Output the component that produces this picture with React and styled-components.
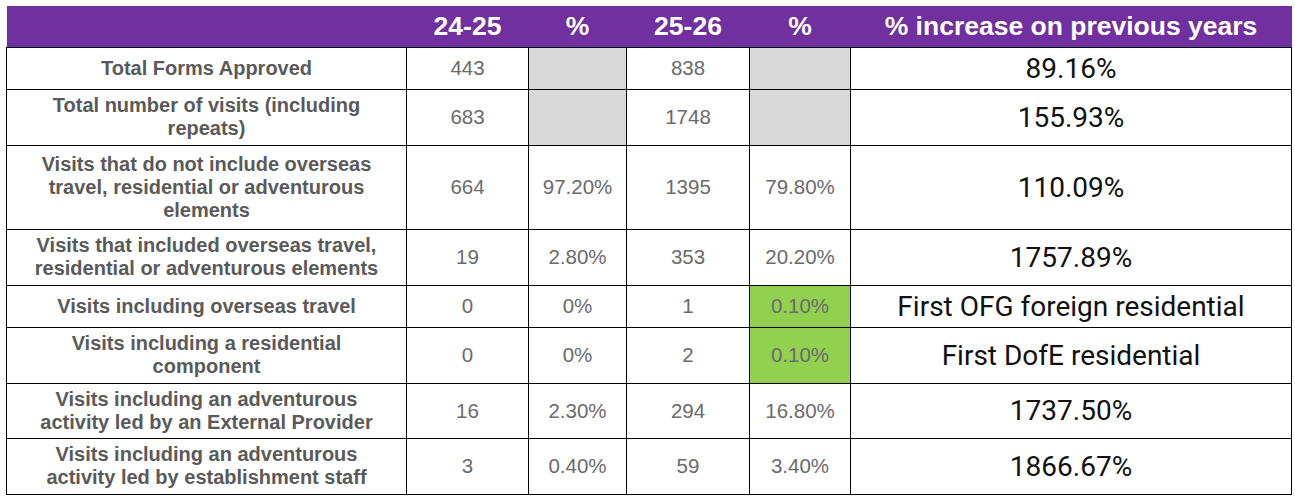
import styled, { createGlobalStyle } from "styled-components";

const GlobalStyle = createGlobalStyle`
  html, body {
    margin: 0;
    padding: 0;
    background: #ffffff;
  }
`;

const rows = [
  { label: "Total Forms Approved", a: "443", ap: null, b: "838", bp: null, inc: "89.16%", h: 42 },
  { label: "Total number of visits (including repeats)", a: "683", ap: null, b: "1748", bp: null, inc: "155.93%", h: 56 },
  { label: "Visits that do not include overseas travel, residential or adventurous elements", a: "664", ap: "97.20%", b: "1395", bp: "79.80%", inc: "110.09%", h: 84 },
  { label: "Visits that included overseas travel, residential or adventurous elements", a: "19", ap: "2.80%", b: "353", bp: "20.20%", inc: "1757.89%", h: 56 },
  { label: "Visits including overseas travel", a: "0", ap: "0%", b: "1", bp: "0.10%", green: true, inc: "First OFG foreign residential", h: 42 },
  { label: "Visits including a residential component", a: "0", ap: "0%", b: "2", bp: "0.10%", green: true, inc: "First DofE residential", h: 56 },
  { label: "Visits including an adventurous activity led by an External Provider", a: "16", ap: "2.30%", b: "294", bp: "16.80%", inc: "1737.50%", h: 55 },
  { label: "Visits including an adventurous activity led by establishment staff", a: "3", ap: "0.40%", b: "59", bp: "3.40%", inc: "1866.67%", h: 56 },
];

export default function App() {
  return (
    <>
      <GlobalStyle />
      <Page>
        <Table>
          <colgroup>
            <col style={{ width: 400 }} />
            <col style={{ width: 122 }} />
            <col style={{ width: 98 }} />
            <col style={{ width: 123 }} />
            <col style={{ width: 101 }} />
            <col style={{ width: 441 }} />
          </colgroup>
          <thead>
            <HeadRow>
              <HeadCell />
              <HeadCell>24-25</HeadCell>
              <HeadCell>%</HeadCell>
              <HeadCell>25-26</HeadCell>
              <HeadCell>%</HeadCell>
              <HeadCell>% increase on previous years</HeadCell>
            </HeadRow>
          </thead>
          <tbody>
            {rows.map((r) => (
              <Row key={r.label} $h={r.h}>
                <LabelCell>{r.label}</LabelCell>
                <NumCell>{r.a}</NumCell>
                <NumCell $fill={r.ap ? null : "#d9d9d9"}>{r.ap}</NumCell>
                <NumCell>{r.b}</NumCell>
                <NumCell $fill={r.bp ? (r.green ? "#92d050" : null) : "#d9d9d9"}>{r.bp}</NumCell>
                <IncreaseCell>{r.inc}</IncreaseCell>
              </Row>
            ))}
          </tbody>
        </Table>
      </Page>
    </>
  );
}

const Page = styled.div`
  padding: 6px 0 0 6px;
`;

const Table = styled.table`
  border-collapse: collapse;
  table-layout: fixed;
  width: 1285px;
`;

const HeadRow = styled.tr`
  height: 41px;
`;

const HeadCell = styled.th`
  background: #7030a0;
  color: #ffffff;
  font-family: "Liberation Sans", Arial, sans-serif;
  font-weight: 700;
  font-size: 26.5px;
  text-align: center;
  vertical-align: middle;
  padding: 0;
  border: none;
`;

const Row = styled.tr`
  height: ${(p) => p.$h}px;
`;

const Cell = styled.td`
  border: 1px solid #000000;
  padding: 0 6px;
  text-align: center;
  vertical-align: middle;
  background: ${(p) => p.$fill || "#ffffff"};
`;

const LabelCell = styled(Cell)`
  font-family: "Liberation Sans", Arial, sans-serif;
  font-weight: 700;
  font-size: 20px;
  line-height: 23px;
  color: #5a5a5a;
  padding: 0 24px;
`;

const NumCell = styled(Cell)`
  font-family: "Liberation Sans", Arial, sans-serif;
  font-size: 20.5px;
  color: #6b6b6b;
`;

const IncreaseCell = styled(Cell)`
  font-family: Roboto, "Liberation Sans", sans-serif;
  font-size: 28px;
  color: #111111;
`;
